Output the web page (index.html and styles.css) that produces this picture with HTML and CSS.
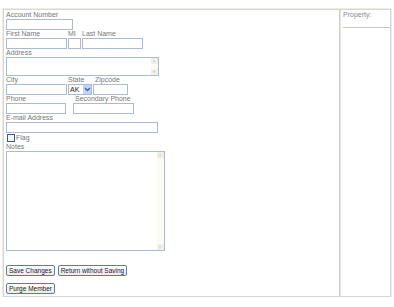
FILE: index.html
```html
<!DOCTYPE html>
<html>
<head>
<meta charset="utf-8">
<link rel="stylesheet" href="styles.css">
</head>
<body>
<div class="frame">
  <div class="main">
    <div class="lbl">Account Number</div>
    <div class="row"><span class="inp w66"></span></div>

    <div class="lbl lblrow"><span class="c61">First Name</span><span class="c14">MI</span><span>Last Name</span></div>
    <div class="row"><span class="inp w61"></span><span class="inp w13"></span><span class="inp w61"></span></div>

    <div class="lbl">Address</div>
    <div class="row addrrow"><div class="area addr"><div class="sb"><span class="arr up"></span><span class="arr dn"></span></div></div></div>

    <div class="lbl lblrow"><span class="c61">City</span><span class="c27">State</span><span>Zipcode</span></div>
    <div class="row">
      <span class="inp w61"></span>
      <span class="sel"><span class="selv">AK</span><span class="selb"><svg width="7" height="5" viewBox="0 0 7 5"><path d="M1 1 L3.5 3.5 L6 1" fill="none" stroke="#4d6185" stroke-width="1.4"/></svg></span></span>
      <span class="inp w35"></span>
    </div>

    <div class="lbl lblrow"><span class="c69">Phone</span><span>Secondary Phone</span></div>
    <div class="row"><span class="inp w60 mr7"></span><span class="inp w61"></span></div>

    <div class="lbl">E-mail Address</div>
    <div class="row"><span class="inp w152"></span></div>

    <div class="flag"><span class="cb"></span><span class="lbl">Flag</span></div>

    <div class="lbl">Notes</div>
    <div class="row notesrow"><div class="area notes"><div class="sb"><span class="arr up"></span><span class="arr dn"></span></div></div></div>

    <div class="btns">
      <button class="btn">Save Changes</button>
      <button class="btn">Return without Saving</button>
    </div>
    <div class="btns2">
      <button class="btn">Purge Member</button>
    </div>
  </div>
  <div class="side">
    <div class="prop">Property:</div>
  </div>
</div>
</body>
</html>
```

FILE: styles.css
```css
html, body {
  margin: 0;
  padding: 0;
  background: #fff;
}
body {
  font-family: "Liberation Sans", Arial, sans-serif;
  font-size: 7px;
  color: #777;
}
.frame {
  margin: 9px 3px 0 3px;
  width: 386px;
  height: 286px;
  border: 1px solid #d8d6d0;
  box-shadow: 0 0 0 1px #eeece6;
  display: flex;
}
.main {
  flex: 1;
  padding: 1px 0 0 2px;
  border-right: 1px solid #d0cec8;
}
.side {
  width: 47px;
  border-left: 1px solid #e6e4de;
  padding: 1px 0 0 2px;
}
.prop {
  color: #8a8a8a;
  height: 16px;
  border-bottom: 1px solid #c8c6c0;
  line-height: 8px;
}
.lbl {
  height: 8px;
  line-height: 8px;
  color: #777;
  white-space: nowrap;
}
.lblrow {
  display: flex;
}
.c61 { width: 62px; display: inline-block; }
.c14 { width: 14px; display: inline-block; }
.c27 { width: 27px; display: inline-block; }
.c69 { width: 69px; display: inline-block; }
.row {
  display: flex;
  gap: 1px;
  height: 11px;
}
.inp {
  display: inline-block;
  box-sizing: border-box;
  height: 11px;
  border: 1px solid #a9bbd0;
  background: #fff;
}
.w66 { width: 67px; }
.w61 { width: 61px; }
.w60 { width: 60px; }
.w13 { width: 13px; }
.w35 { width: 35px; }
.w152 { width: 152px; }
.mr7 { margin-right: 6px; }
.area {
  box-sizing: border-box;
  border: 1px solid #a9bbd0;
  background: #fff;
  display: flex;
  justify-content: flex-end;
}
.addr { width: 153px; height: 19px; }
.addrrow { height: 19px; }
.notes { width: 159px; height: 100px; }
.notesrow { height: 100px; }
.sb {
  width: 7px;
  background: #fbfbf6;
  display: flex;
  flex-direction: column;
  justify-content: space-between;
}
.arr {
  display: block;
  height: 6px;
  background: #f0efe8;
  position: relative;
}
.arr::after {
  content: "";
  position: absolute;
  left: 2px;
  top: 2px;
  border-left: 1.5px solid transparent;
  border-right: 1.5px solid transparent;
}
.up::after { border-bottom: 2px solid #c4c4bc; }
.dn::after { border-top: 2px solid #c4c4bc; }
.sel {
  display: inline-flex;
  box-sizing: border-box;
  width: 24px;
  height: 11px;
  border: 1px solid #a9bbd0;
  background: #fff;
}
.selv {
  flex: 1;
  color: #222;
  line-height: 9px;
  padding-left: 1px;
}
.selb {
  width: 8px;
  background: #c1d3fb;
  display: flex;
  align-items: center;
  justify-content: center;
}
.flag {
  display: flex;
  align-items: center;
  gap: 1px;
  height: 10px;
  padding-left: 1px;
}
.cb {
  display: inline-block;
  width: 6px;
  height: 6px;
  border: 1px solid #3c5a86;
  background: #f6f6f0;
}
.btns {
  margin-top: 14px;
  display: flex;
  gap: 3px;
}
.btns2 {
  margin-top: 7px;
}
.btn {
  font-family: "Liberation Sans", Arial, sans-serif;
  font-size: 6.5px;
  color: #222;
  height: 11px;
  line-height: 8px;
  padding: 0 2px;
  border: 1px solid #5a7ba8;
  border-radius: 2px;
  background: linear-gradient(#fefefe, #ecebe6);
  margin: 0;
}
```
